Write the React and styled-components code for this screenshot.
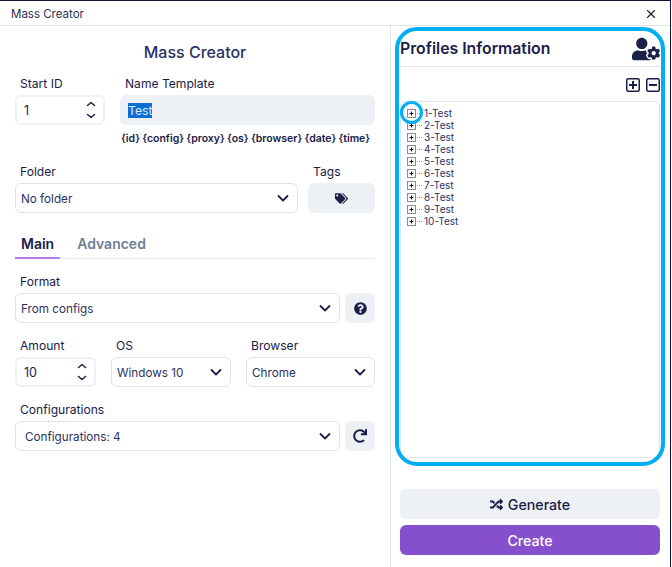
import React from 'react';
import styled, { createGlobalStyle } from 'styled-components';
import { FaTags, FaQuestionCircle, FaRedo, FaRandom, FaUserCog } from 'react-icons/fa';
import { FiX } from 'react-icons/fi';

const NAVY = '#1a2048';

const Global = createGlobalStyle`
    html, body { margin: 0; padding: 0; background: #fff; }
    body { font-family: Inter, "Liberation Sans", sans-serif; color: ${NAVY}; }
`;

const Chevron = () => (
    <svg width="14" height="14" viewBox="0 0 14 14" fill="none" stroke={NAVY} strokeWidth="1.8" strokeLinecap="round" strokeLinejoin="round">
        <path d="M2.5 4l4.5 4.5L11.5 4" />
    </svg>
);

const Spin = () => (
    <SpinBox>
        <svg width="10" height="6" viewBox="0 0 10 6" fill="none" stroke={NAVY} strokeWidth="1.5" strokeLinecap="round" strokeLinejoin="round"><path d="M1.5 4.5L5 1.5l3.5 3" /></svg>
        <svg width="10" height="6" viewBox="0 0 10 6" fill="none" stroke={NAVY} strokeWidth="1.5" strokeLinecap="round" strokeLinejoin="round"><path d="M1.5 1.5L5 4.5l3.5-3" /></svg>
    </SpinBox>
);

const SquareIcon = ({ plus }) => (
    <svg width="14" height="14" viewBox="0 0 14 14" fill="none" stroke={NAVY} strokeWidth="1.5">
        <rect x="0.75" y="0.75" width="12.5" height="12.5" rx="1.5" />
        <path d="M3 7h8" strokeWidth="2" />
        {plus && <path d="M7 3v8" strokeWidth="2" />}
    </svg>
);

const Expander = () => (
    <svg width="15" height="9" viewBox="0 0 15 9" fill="none">
        <rect x="0.5" y="0.5" width="8" height="8" fill="#fff" stroke="#8a8a8a" />
        <path d="M2.5 4.5h4M4.5 2.5v4" stroke="#111" />
        <path d="M10 4.5h5" stroke="#999" strokeDasharray="1 1" />
    </svg>
);

const App = () => {
    const profiles = Array.from({ length: 10 }, (_, i) => `${i + 1}-Test`);

    return (
        <Window>
            <Global />
            <TitleBar>
                <span>Mass Creator</span>
                <FiX size={14} color="#222" />
            </TitleBar>
            <Body>
                <LeftPanel>
                    <Heading>Mass Creator</Heading>
                    <Row $top={14} $gap={15}>
                        <Field $width="90px">
                            <Label>Start ID</Label>
                            <SpinInput><span>1</span><Spin /></SpinInput>
                        </Field>
                        <Field $grow>
                            <Label>Name Template</Label>
                            <FilledInput><Selected>Test</Selected></FilledInput>
                            <Hints>
                                <span>{'{id}'}</span><span>{'{config}'}</span><span>{'{proxy}'}</span><span>{'{os}'}</span><span>{'{browser}'}</span><span>{'{date}'}</span><span>{'{time}'}</span>
                            </Hints>
                        </Field>
                    </Row>
                    <Row $top={18} $gap={10}>
                        <Field $grow>
                            <Label>Folder</Label>
                            <Select>No folder<Chevron /></Select>
                        </Field>
                        <Field $width="67px">
                            <Label>Tags</Label>
                            <IconButton $wide><FaTags size={13} color={NAVY} /></IconButton>
                        </Field>
                    </Row>
                    <Tabs>
                        <Tab $active>Main</Tab>
                        <Tab>Advanced</Tab>
                    </Tabs>
                    <Row $top={15} $gap={15}>
                        <Field $grow>
                            <Label>Format</Label>
                            <SelectLine>
                                <Select>From configs<Chevron /></Select>
                                <IconButton><FaQuestionCircle size={13} color={NAVY} /></IconButton>
                            </SelectLine>
                        </Field>
                    </Row>
                    <Row $top={15} $gap={15}>
                        <Field $width="81px">
                            <Label>Amount</Label>
                            <SpinInput><span>10</span><Spin /></SpinInput>
                        </Field>
                        <Field $width="120px">
                            <Label>OS</Label>
                            <Select>Windows 10<Chevron /></Select>
                        </Field>
                        <Field $grow>
                            <Label>Browser</Label>
                            <Select>Chrome<Chevron /></Select>
                        </Field>
                    </Row>
                    <Row $top={15} $gap={15}>
                        <Field $grow>
                            <Label>Configurations</Label>
                            <SelectLine>
                                <Select $indent>Configurations: 4<Chevron /></Select>
                                <IconButton><FaRedo size={14} color={NAVY} /></IconButton>
                            </SelectLine>
                        </Field>
                    </Row>
                </LeftPanel>
                <RightPanel>
                    <InfoHead>
                        <InfoTitle>Profiles Information</InfoTitle>
                        <FaUserCog size={28} color={NAVY} />
                    </InfoHead>
                    <TreeTools>
                        <SquareIcon plus />
                        <SquareIcon />
                    </TreeTools>
                    <Tree>
                        {profiles.map((name) => (
                            <TreeRow key={name}>
                                <Expander />
                                <span>{name}</span>
                            </TreeRow>
                        ))}
                    </Tree>
                    <Actions>
                        <Generate><FaRandom size={13} color={NAVY} />Generate</Generate>
                        <Create>Create</Create>
                    </Actions>
                </RightPanel>
            </Body>
            <PanelMark />
            <ExpanderMark />
        </Window>
    );
};

const Window = styled.div`
    position: relative;
    width: 671px;
    height: 567px;
    box-sizing: border-box;
    border-top: 1px solid #10123a;
    border-right: 1px solid #10123a;
    overflow: hidden;
    background: #fff;
    display: flex;
    flex-direction: column;
`;

const TitleBar = styled.div`
    height: 25px;
    box-sizing: border-box;
    flex: none;
    display: flex;
    align-items: center;
    justify-content: space-between;
    padding: 1px 12px 0 11px;
    border-bottom: 1px solid #dfe3e8;
    font-size: 11.5px;
    color: #2b2f55;
`;

const Body = styled.div`
    flex: 1;
    display: flex;
    min-height: 0;
`;

const LeftPanel = styled.div`
    width: 391px;
    box-sizing: border-box;
    padding: 16px 15px 0 15px;
    border-right: 1px solid #e2e6ea;
`;

const Heading = styled.h1`
    margin: 0;
    font-size: 16px;
    line-height: 20px;
    font-weight: 500;
    text-align: center;
    color: #2b3163;
`;

const Row = styled.div`
    display: flex;
    gap: ${(p) => p.$gap}px;
    margin-top: ${(p) => p.$top}px;
`;

const Field = styled.div`
    display: flex;
    flex-direction: column;
    min-width: 0;
    flex: ${(p) => (p.$grow ? '1' : 'none')};
    width: ${(p) => p.$width || 'auto'};
`;

const Label = styled.label`
    font-size: 12.1px;
    line-height: 16px;
    margin-bottom: 3px;
    padding-left: 5px;
`;

const SpinInput = styled.div`
    height: 30px;
    box-sizing: border-box;
    border: 2px solid #eef1f5;
    border-radius: 6px;
    display: flex;
    align-items: center;
    justify-content: space-between;
    padding: 0 7px;
    font-size: 12.5px;
`;

const SpinBox = styled.div`
    display: flex;
    flex-direction: column;
    gap: 6px;
`;

const FilledInput = styled.div`
    height: 30px;
    box-sizing: border-box;
    border-radius: 6px;
    background: #edf0f5;
    display: flex;
    align-items: center;
    padding: 1px 0 0 8px;
    font-size: 12.2px;
`;

const Selected = styled.span`
    background: #0a6fd4;
    color: #dfe9f5;
    line-height: 15px;
`;

const Hints = styled.div`
    display: flex;
    justify-content: space-between;
    margin-top: 7px;
    padding: 0 5px 0 1px;
    font-size: 10.5px;
    line-height: 14px;
    font-weight: 600;
`;

const Select = styled.div`
    flex: 1;
    min-width: 0;
    height: 30px;
    box-sizing: border-box;
    border: 1px solid #dfe3e8;
    border-radius: 6px;
    display: flex;
    align-items: center;
    justify-content: space-between;
    padding: 1px 7px 0 ${(p) => (p.$indent ? 9 : 5)}px;
    font-size: 11.7px;
    color: #2b3163;
`;

const SelectLine = styled.div`
    display: flex;
    gap: 5px;
`;

const IconButton = styled.div`
    flex: none;
    width: ${(p) => (p.$wide ? 'auto' : '30px')};
    height: 30px;
    border-radius: 6px;
    background: #edf0f5;
    display: flex;
    align-items: center;
    justify-content: center;
`;

const Tabs = styled.div`
    display: flex;
    gap: 11px;
    margin-top: 21px;
    border-bottom: 1px solid #e8ebef;
`;

const Tab = styled.div`
    padding: 0 6px 3px;
    margin-bottom: -1px;
    font-size: 14px;
    line-height: 20px;
    font-weight: 600;
    color: ${(p) => (p.$active ? NAVY : '#6f7f96')};
    border-bottom: 2px solid ${(p) => (p.$active ? '#b77be8' : 'transparent')};
`;

const RightPanel = styled.div`
    flex: 1;
    min-width: 0;
    box-sizing: border-box;
    padding: 5px 10px 12px 9px;
    display: flex;
    flex-direction: column;
`;

const InfoHead = styled.div`
    display: flex;
    align-items: center;
    justify-content: space-between;
    height: 35px;
    border-bottom: 1px solid #dfe3e8;
`;

const InfoTitle = styled.h2`
    margin: 0;
    font-size: 15.8px;
    font-weight: 600;
`;

const TreeTools = styled.div`
    display: flex;
    justify-content: flex-end;
    gap: 6px;
    height: 14px;
    margin-top: 11px;
`;

const Tree = styled.div`
    flex: 1;
    margin-top: 9px;
    border: 1px solid #dfe3e8;
    border-radius: 6px;
    padding: 5px 6px;
`;

const TreeRow = styled.div`
    display: flex;
    align-items: center;
    gap: 2px;
    height: 12px;
    font-size: 10px;
    color: #2b3163;
`;

const Actions = styled.div`
    display: flex;
    flex-direction: column;
    gap: 6px;
    margin-top: 31px;
`;

const Generate = styled.div`
    height: 30px;
    border-radius: 6px;
    background: #edf0f5;
    display: flex;
    align-items: center;
    justify-content: center;
    gap: 5px;
    font-size: 14.2px;
    font-weight: 500;
`;

const Create = styled.div`
    height: 30px;
    border-radius: 6px;
    background: #864fcc;
    color: #fff;
    display: flex;
    align-items: center;
    justify-content: center;
    font-size: 14.2px;
    font-weight: 500;
`;

const PanelMark = styled.div`
    position: absolute;
    left: 395px;
    top: 26px;
    width: 270px;
    height: 439px;
    box-sizing: border-box;
    border: 4px solid #00aef5;
    border-radius: 22px;
`;

const ExpanderMark = styled.div`
    position: absolute;
    left: 400px;
    top: 100px;
    width: 23px;
    height: 23px;
    box-sizing: border-box;
    border: 3.5px solid #00aef5;
    border-radius: 50%;
`;

export default App;
